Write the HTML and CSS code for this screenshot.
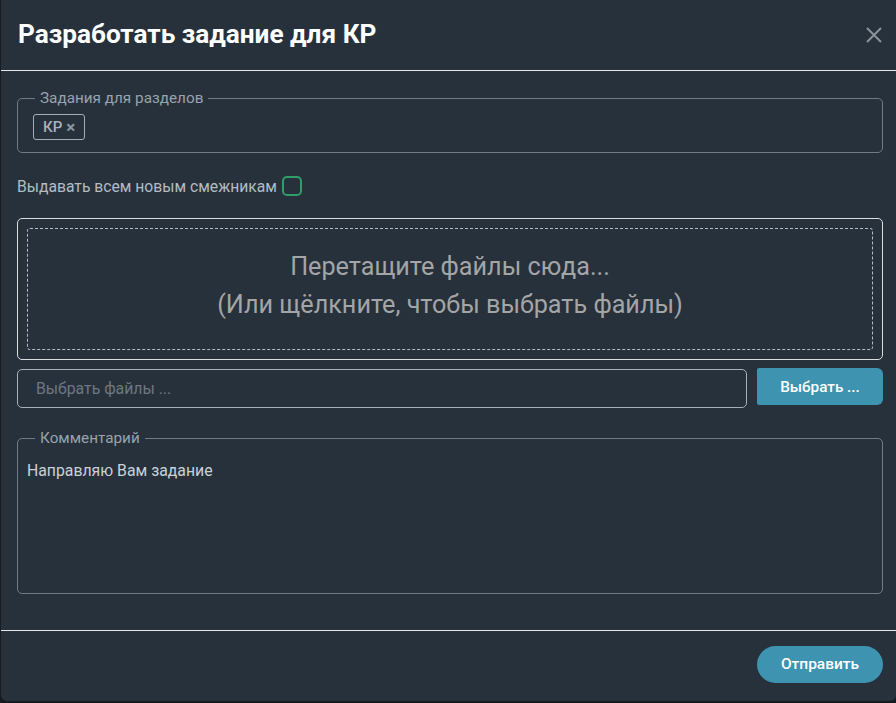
FILE: index.html
```html
<!DOCTYPE html>
<html lang="ru">
<head>
<meta charset="utf-8">
<link rel="stylesheet" href="styles.css">
</head>
<body>
<div class="modal">
  <header class="modal-header">
    <h1 class="title">Разработать задание для КР</h1>
    <button class="close" aria-label="Закрыть">
      <svg width="18" height="18" viewBox="0 0 18 18"><path d="M2 2L16 16M16 2L2 16" stroke="#8a939b" stroke-width="2"/></svg>
    </button>
  </header>
  <div class="modal-body">
    <fieldset class="group sections">
      <legend>Задания для разделов</legend>
      <span class="chip">КР <span class="chip-x">×</span></span>
    </fieldset>
    <label class="check-row">Выдавать всем новым смежникам <span class="checkbox"></span></label>
    <div class="dropzone">
      <div class="dropzone-inner">
        <div>Перетащите файлы сюда...</div>
        <div>(Или щёлкните, чтобы выбрать файлы)</div>
      </div>
    </div>
    <div class="file-row">
      <div class="file-input">Выбрать файлы ...</div>
      <button class="btn-pick">Выбрать ...</button>
    </div>
    <fieldset class="group comment">
      <legend>Комментарий</legend>
      <div class="comment-text">Направляю Вам задание</div>
    </fieldset>
  </div>
  <footer class="modal-footer">
    <button class="btn-send">Отправить</button>
  </footer>
</div>
</body>
</html>
```
FILE: styles.css
```css
* { box-sizing: border-box; }
html, body { margin: 0; padding: 0; }
body {
  background: #161c20;
  width: 896px;
  height: 703px;
  overflow: hidden;
  font-family: Roboto, "Noto Sans", sans-serif;
}
.modal {
  margin-left: 1px;
  width: 895px;
  height: 701px;
  background: #27313b;
  border-radius: 0 0 6px 6px;
  display: flex;
  flex-direction: column;
}
.modal-header {
  height: 71px;
  border-bottom: 1px solid #e6e9eb;
  display: flex;
  align-items: center;
  justify-content: space-between;
  padding: 0 13px 0 17px;
}
.title {
  margin: 0;
  font-size: 26.2px;
  font-weight: 700;
  color: #ffffff;
  padding-bottom: 2px;
}
.close {
  background: none;
  border: 0;
  padding: 0;
  width: 18px;
  height: 18px;
  display: flex;
  margin-bottom: 1px;
}
.modal-body {
  padding: 19px 13px 0 16px;
  flex: 1;
}
.group {
  margin: 0;
  border: 1px solid #6d7c88;
  border-radius: 5px;
  padding: 0 15px;
}
.group legend {
  color: #97a3ad;
  font-size: 15.3px;
  padding: 0 5px;
  margin-left: 2px;
  line-height: 16px;
}
.sections {
  height: 63px;
  padding-top: 8px;
}
.chip {
  display: inline-flex;
  align-items: center;
  height: 26px;
  border: 1px solid #a3aeb6;
  border-radius: 3px;
  padding: 0 9px 0 9px;
  color: #a9b3bb;
  font-size: 15px;
  font-weight: 500;
  gap: 4px;
}
.chip-x {
  font-size: 17px;
  font-weight: 700;
  color: #8d979f;
}
.check-row {
  display: flex;
  align-items: center;
  gap: 5px;
  margin-top: 23px;
  height: 20px;
  color: #b2bcc4;
  font-size: 15.7px;
}
.checkbox {
  width: 20px;
  height: 20px;
  border: 2px solid #2f9e68;
  border-radius: 5px;
  display: inline-block;
}
.dropzone {
  margin-top: 22px;
  height: 142px;
  border: 1px solid #d9dee1;
  border-radius: 5px;
  padding: 9px;
}
.dropzone-inner {
  height: 100%;
  border: 1px dashed #b7bec3;
  border-radius: 3px;
  display: flex;
  flex-direction: column;
  align-items: center;
  justify-content: center;
  color: #a3a5a7;
  font-size: 25.2px;
  line-height: 38px;
  padding-bottom: 7px;
}
.file-row {
  display: flex;
  margin-top: 9px;
  gap: 10px;
  align-items: flex-start;
}
.file-input {
  flex: 1;
  height: 39px;
  border: 1px solid #a6b0b7;
  border-radius: 5px;
  color: #6c7883;
  font-size: 15.8px;
  padding: 0 18px;
  display: flex;
  align-items: center;
}
.btn-pick {
  width: 126px;
  height: 37px;
  margin-top: -1px;
  background: #3e93b0;
  border: 0;
  border-radius: 2px 6px 6px 2px;
  color: #ffffff;
  font-family: Roboto, sans-serif;
  font-size: 15.3px;
  font-weight: 500;
}
.comment {
  margin-top: 22px;
  height: 164px;
  padding: 6px 9px 0;
}
.comment legend { margin-left: 8px; }
.comment-text {
  color: #c9d1d7;
  font-size: 15.8px;
  margin-top: 9px;
}
.modal-footer {
  height: 71px;
  border-top: 1px solid #e6e9eb;
  display: flex;
  align-items: center;
  justify-content: flex-end;
  padding: 0 13px 4px 0;
}
.btn-send {
  width: 126px;
  height: 37px;
  background: #3e93b0;
  border: 0;
  border-radius: 19px;
  color: #ffffff;
  font-family: Roboto, sans-serif;
  font-size: 15.5px;
  font-weight: 500;
}
```
